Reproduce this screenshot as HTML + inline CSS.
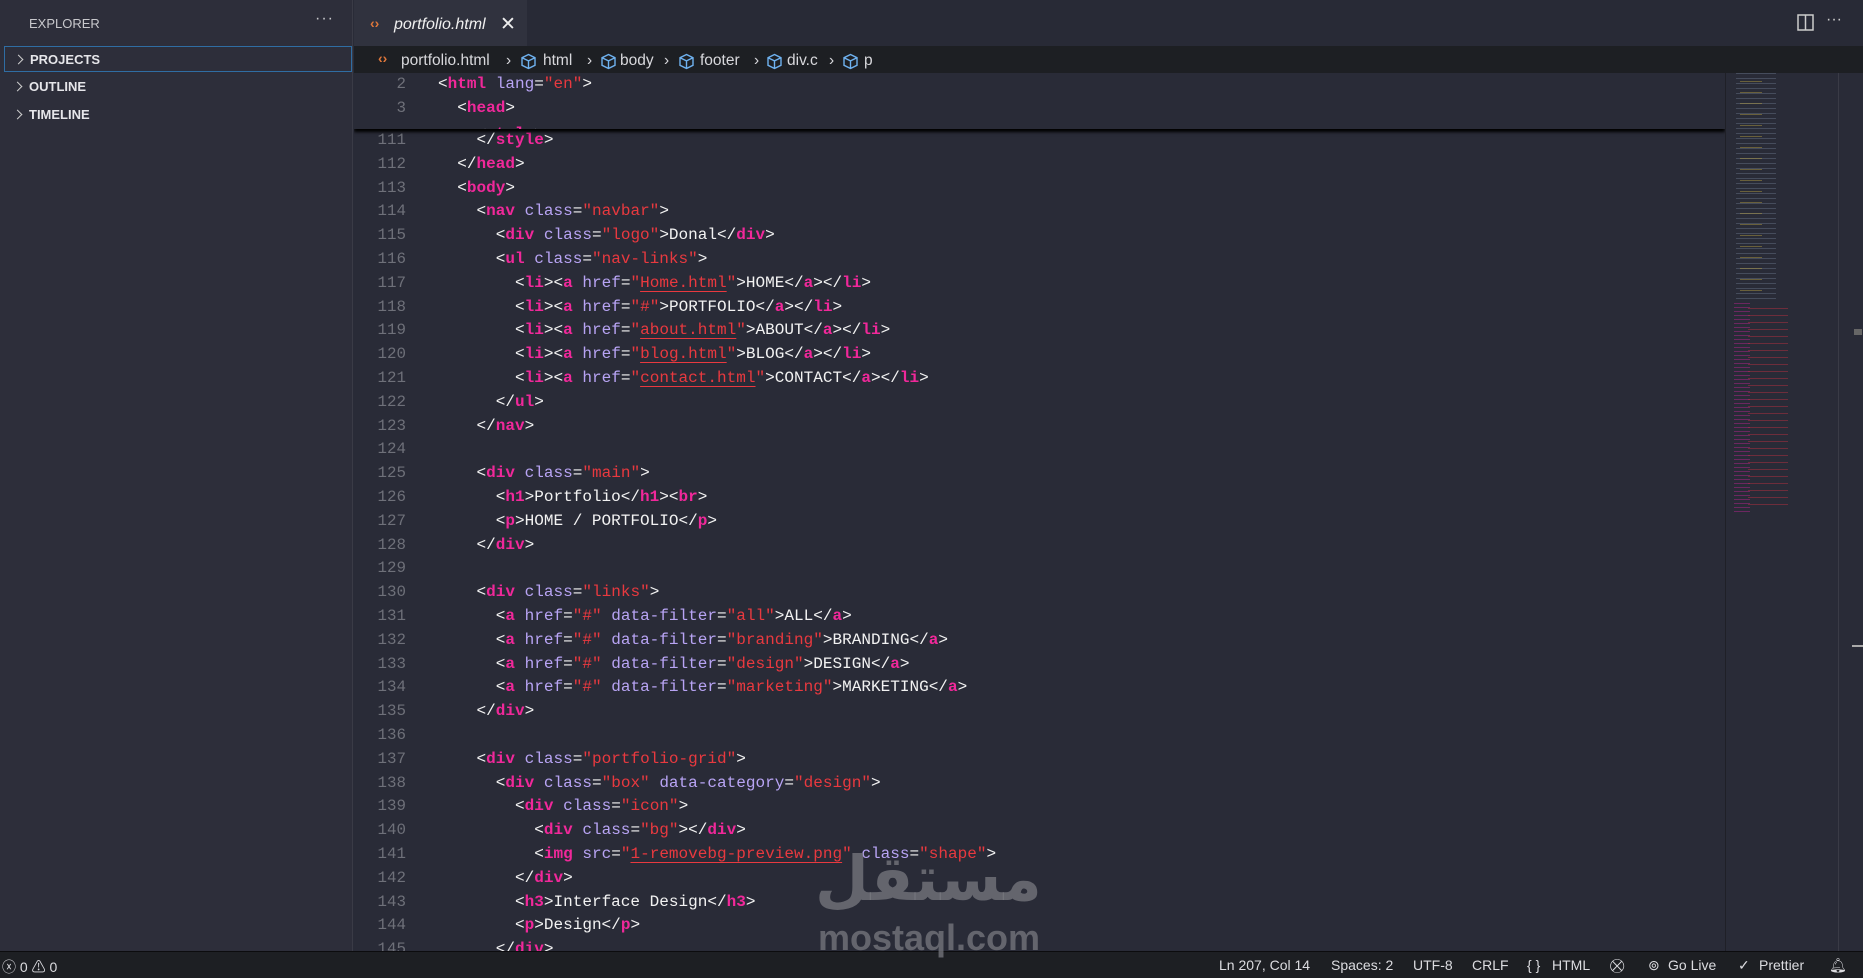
<!DOCTYPE html>
<html><head><meta charset="utf-8"><style>
*{margin:0;padding:0;box-sizing:border-box}
body{width:1863px;height:978px;overflow:hidden;background:#292b37;font-family:"Liberation Sans",sans-serif;color:#d4d4d8;position:relative}
.side{position:absolute;left:0;top:0;width:353px;height:951px;background:#2d2e3a;border-right:1px solid #3a3b46}
.side .hd{position:absolute;left:29px;top:16px;font-size:13px;color:#c8c8cc}
.side .dots{position:absolute;left:315px;top:10px;font-size:16px;color:#c8c8cc;letter-spacing:1px}
.sec{position:absolute;left:4px;width:348px;height:26px;font-size:13px;font-weight:bold;color:#e6e6ea;line-height:26px;padding-left:25px}
.sec:before{content:"";position:absolute;left:10px;top:9px;width:6px;height:6px;border-right:1.3px solid #ccc;border-top:1.3px solid #ccc;transform:rotate(45deg)}
.tabbar{position:absolute;left:354px;top:0;right:0;height:46px;background:#282a36}
.tab{position:absolute;left:0;top:0;width:173px;height:46px;background:#30323e}
.bc{position:absolute;left:354px;top:46px;right:0;height:27px;background:#1d1f23;font-size:15.5px;color:#d8d8dc}
.bc span{position:absolute;top:6px}
.cube{position:absolute;top:7px}
.editor{position:absolute;left:354px;top:73px;width:1371px;height:878px;overflow:hidden}
.ln{position:absolute;left:0;width:52px;text-align:right;font-family:"Liberation Mono",monospace;font-size:15.8px;line-height:24px;color:#6e7079}
.cd{position:absolute;left:84px;font-family:"Liberation Mono",monospace;font-size:16.05px;line-height:24px;color:#f2f2f2;white-space:pre}
.t{color:#f0289a;font-weight:bold}.a{color:#b8a4f4}.s{color:#e8393f}.u{color:#e8393f;text-decoration:underline;text-decoration-color:#e8393f;text-underline-offset:4px}
.sticky{position:absolute;left:0;top:0;width:1371px;height:56px;background:#292b37;box-shadow:0 3px 3px #000;z-index:2;overflow:hidden}
.mini{position:absolute;left:1725px;top:73px;width:138px;height:878px;background:#292b37;border-left:1px solid #1f2027}
.status{position:absolute;left:0;top:951px;width:1863px;height:27px;background:#1d1f23;border-top:1px solid #0c0c0e;font-size:14px;color:#dcdce0}
.status span{position:absolute;top:5px;white-space:nowrap}
.wm{position:absolute;color:rgba(120,122,128,.75);font-weight:bold;z-index:3}
</style></head><body>
<div class="side">
<div class="hd">EXPLORER</div><div class="dots">···</div>
<div class="sec" style="top:46px;border:1px solid #2f6da3">PROJECTS</div>
<div class="sec" style="top:74px">OUTLINE</div>
<div class="sec" style="top:102px">TIMELINE</div>
</div>
<div class="tabbar"><div class="tab">
<span style="position:absolute;left:16px;top:15px;color:#e0773a;font-size:14px;font-weight:bold">‹›</span>
<span style="position:absolute;left:40px;top:16px;font-style:italic;font-size:16px;color:#f0f0f0">portfolio.html</span>
<span style="position:absolute;left:146px;top:13px;font-size:19px;color:#eee">✕</span></div>
<svg style="position:absolute;left:1443px;top:14px" width="18" height="18"><rect x="1" y="1" width="15" height="15" fill="none" stroke="#ccc" stroke-width="1.5"/><line x1="8.5" y1="1" x2="8.5" y2="16" stroke="#ccc" stroke-width="1.5"/></svg>
<span style="position:absolute;left:1472px;top:11px;font-size:16px;color:#ccc">···</span>
</div>
<div class="bc">
<span style="left:24px;top:4px;color:#e0773a;font-weight:bold;font-size:14px">‹›</span>
<span style="left:47px">portfolio.html</span><span style="left:152px">›</span>
<svg class="cube" style="left:166px" width="17" height="17" viewBox="0 0 17 17"><path d="M8.5 1.5l6.5 3.2v7.6l-6.5 3.2-6.5-3.2V4.7z M2 4.7l6.5 3.2 6.5-3.2 M8.5 7.9v7.6" fill="none" stroke="#6fb2f0" stroke-width="1.4"/></svg>
<span style="left:189px">html</span><span style="left:233px">›</span>
<svg class="cube" style="left:246px" width="17" height="17" viewBox="0 0 17 17"><path d="M8.5 1.5l6.5 3.2v7.6l-6.5 3.2-6.5-3.2V4.7z M2 4.7l6.5 3.2 6.5-3.2 M8.5 7.9v7.6" fill="none" stroke="#6fb2f0" stroke-width="1.4"/></svg>
<span style="left:266px">body</span><span style="left:310px">›</span>
<svg class="cube" style="left:324px" width="17" height="17" viewBox="0 0 17 17"><path d="M8.5 1.5l6.5 3.2v7.6l-6.5 3.2-6.5-3.2V4.7z M2 4.7l6.5 3.2 6.5-3.2 M8.5 7.9v7.6" fill="none" stroke="#6fb2f0" stroke-width="1.4"/></svg>
<span style="left:346px">footer</span><span style="left:400px">›</span>
<svg class="cube" style="left:412px" width="17" height="17" viewBox="0 0 17 17"><path d="M8.5 1.5l6.5 3.2v7.6l-6.5 3.2-6.5-3.2V4.7z M2 4.7l6.5 3.2 6.5-3.2 M8.5 7.9v7.6" fill="none" stroke="#6fb2f0" stroke-width="1.4"/></svg>
<span style="left:433px">div.c</span><span style="left:475px">›</span>
<svg class="cube" style="left:488px" width="17" height="17" viewBox="0 0 17 17"><path d="M8.5 1.5l6.5 3.2v7.6l-6.5 3.2-6.5-3.2V4.7z M2 4.7l6.5 3.2 6.5-3.2 M8.5 7.9v7.6" fill="none" stroke="#6fb2f0" stroke-width="1.4"/></svg>
<span style="left:510px">p</span>
</div>
<div class="editor">
<div class="sticky">
<div class="ln" style="top:-1px">2</div><div class="cd" style="top:-1px">&lt;<span class="t">html</span> <span class="a">lang</span>=<span class="s">"en"</span>&gt;</div>
<div class="ln" style="top:23px">3</div><div class="cd" style="top:23px">  &lt;<span class="t">head</span>&gt;</div>
<div class="cd" style="top:49px">    &lt;<span class="t">style</span>&gt;</div>
</div>
<div class="ln" style="top:55px">111</div><div class="cd" style="top:55px">    &lt;/<span class="t">style</span>&gt;</div>
<div class="ln" style="top:78.8px">112</div><div class="cd" style="top:78.8px">  &lt;/<span class="t">head</span>&gt;</div>
<div class="ln" style="top:102.6px">113</div><div class="cd" style="top:102.6px">  &lt;<span class="t">body</span>&gt;</div>
<div class="ln" style="top:126.4px">114</div><div class="cd" style="top:126.4px">    &lt;<span class="t">nav</span> <span class="a">class</span>=<span class="s">"navbar"</span>&gt;</div>
<div class="ln" style="top:150.2px">115</div><div class="cd" style="top:150.2px">      &lt;<span class="t">div</span> <span class="a">class</span>=<span class="s">"logo"</span>&gt;Donal&lt;/<span class="t">div</span>&gt;</div>
<div class="ln" style="top:174px">116</div><div class="cd" style="top:174px">      &lt;<span class="t">ul</span> <span class="a">class</span>=<span class="s">"nav-links"</span>&gt;</div>
<div class="ln" style="top:197.8px">117</div><div class="cd" style="top:197.8px">        &lt;<span class="t">li</span>&gt;&lt;<span class="t">a</span> <span class="a">href</span>=<span class="s">"<span class="u">Home.html</span>"</span>&gt;HOME&lt;/<span class="t">a</span>&gt;&lt;/<span class="t">li</span>&gt;</div>
<div class="ln" style="top:221.6px">118</div><div class="cd" style="top:221.6px">        &lt;<span class="t">li</span>&gt;&lt;<span class="t">a</span> <span class="a">href</span>=<span class="s">"#"</span>&gt;PORTFOLIO&lt;/<span class="t">a</span>&gt;&lt;/<span class="t">li</span>&gt;</div>
<div class="ln" style="top:245.4px">119</div><div class="cd" style="top:245.4px">        &lt;<span class="t">li</span>&gt;&lt;<span class="t">a</span> <span class="a">href</span>=<span class="s">"<span class="u">about.html</span>"</span>&gt;ABOUT&lt;/<span class="t">a</span>&gt;&lt;/<span class="t">li</span>&gt;</div>
<div class="ln" style="top:269.2px">120</div><div class="cd" style="top:269.2px">        &lt;<span class="t">li</span>&gt;&lt;<span class="t">a</span> <span class="a">href</span>=<span class="s">"<span class="u">blog.html</span>"</span>&gt;BLOG&lt;/<span class="t">a</span>&gt;&lt;/<span class="t">li</span>&gt;</div>
<div class="ln" style="top:293px">121</div><div class="cd" style="top:293px">        &lt;<span class="t">li</span>&gt;&lt;<span class="t">a</span> <span class="a">href</span>=<span class="s">"<span class="u">contact.html</span>"</span>&gt;CONTACT&lt;/<span class="t">a</span>&gt;&lt;/<span class="t">li</span>&gt;</div>
<div class="ln" style="top:316.8px">122</div><div class="cd" style="top:316.8px">      &lt;/<span class="t">ul</span>&gt;</div>
<div class="ln" style="top:340.6px">123</div><div class="cd" style="top:340.6px">    &lt;/<span class="t">nav</span>&gt;</div>
<div class="ln" style="top:364.4px">124</div>
<div class="ln" style="top:388.2px">125</div><div class="cd" style="top:388.2px">    &lt;<span class="t">div</span> <span class="a">class</span>=<span class="s">"main"</span>&gt;</div>
<div class="ln" style="top:412px">126</div><div class="cd" style="top:412px">      &lt;<span class="t">h1</span>&gt;Portfolio&lt;/<span class="t">h1</span>&gt;&lt;<span class="t">br</span>&gt;</div>
<div class="ln" style="top:435.8px">127</div><div class="cd" style="top:435.8px">      &lt;<span class="t">p</span>&gt;HOME / PORTFOLIO&lt;/<span class="t">p</span>&gt;</div>
<div class="ln" style="top:459.6px">128</div><div class="cd" style="top:459.6px">    &lt;/<span class="t">div</span>&gt;</div>
<div class="ln" style="top:483.4px">129</div>
<div class="ln" style="top:507.2px">130</div><div class="cd" style="top:507.2px">    &lt;<span class="t">div</span> <span class="a">class</span>=<span class="s">"links"</span>&gt;</div>
<div class="ln" style="top:531px">131</div><div class="cd" style="top:531px">      &lt;<span class="t">a</span> <span class="a">href</span>=<span class="s">"#"</span> <span class="a">data-filter</span>=<span class="s">"all"</span>&gt;ALL&lt;/<span class="t">a</span>&gt;</div>
<div class="ln" style="top:554.8px">132</div><div class="cd" style="top:554.8px">      &lt;<span class="t">a</span> <span class="a">href</span>=<span class="s">"#"</span> <span class="a">data-filter</span>=<span class="s">"branding"</span>&gt;BRANDING&lt;/<span class="t">a</span>&gt;</div>
<div class="ln" style="top:578.6px">133</div><div class="cd" style="top:578.6px">      &lt;<span class="t">a</span> <span class="a">href</span>=<span class="s">"#"</span> <span class="a">data-filter</span>=<span class="s">"design"</span>&gt;DESIGN&lt;/<span class="t">a</span>&gt;</div>
<div class="ln" style="top:602.4px">134</div><div class="cd" style="top:602.4px">      &lt;<span class="t">a</span> <span class="a">href</span>=<span class="s">"#"</span> <span class="a">data-filter</span>=<span class="s">"marketing"</span>&gt;MARKETING&lt;/<span class="t">a</span>&gt;</div>
<div class="ln" style="top:626.2px">135</div><div class="cd" style="top:626.2px">    &lt;/<span class="t">div</span>&gt;</div>
<div class="ln" style="top:650px">136</div>
<div class="ln" style="top:673.8px">137</div><div class="cd" style="top:673.8px">    &lt;<span class="t">div</span> <span class="a">class</span>=<span class="s">"portfolio-grid"</span>&gt;</div>
<div class="ln" style="top:697.6px">138</div><div class="cd" style="top:697.6px">      &lt;<span class="t">div</span> <span class="a">class</span>=<span class="s">"box"</span> <span class="a">data-category</span>=<span class="s">"design"</span>&gt;</div>
<div class="ln" style="top:721.4px">139</div><div class="cd" style="top:721.4px">        &lt;<span class="t">div</span> <span class="a">class</span>=<span class="s">"icon"</span>&gt;</div>
<div class="ln" style="top:745.2px">140</div><div class="cd" style="top:745.2px">          &lt;<span class="t">div</span> <span class="a">class</span>=<span class="s">"bg"</span>&gt;&lt;/<span class="t">div</span>&gt;</div>
<div class="ln" style="top:769px">141</div><div class="cd" style="top:769px">          &lt;<span class="t">img</span> <span class="a">src</span>=<span class="s">"<span class="u">1-removebg-preview.png</span>"</span> <span class="a">class</span>=<span class="s">"shape"</span>&gt;</div>
<div class="ln" style="top:792.8px">142</div><div class="cd" style="top:792.8px">        &lt;/<span class="t">div</span>&gt;</div>
<div class="ln" style="top:816.6px">143</div><div class="cd" style="top:816.6px">        &lt;<span class="t">h3</span>&gt;Interface Design&lt;/<span class="t">h3</span>&gt;</div>
<div class="ln" style="top:840.4px">144</div><div class="cd" style="top:840.4px">        &lt;<span class="t">p</span>&gt;Design&lt;/<span class="t">p</span>&gt;</div>
<div class="ln" style="top:864.2px">145</div><div class="cd" style="top:864.2px">      &lt;/<span class="t">div</span>&gt;</div>
</div>
<div class="mini">
<div style="position:absolute;left:10px;top:0;width:40px;height:230px;background:repeating-linear-gradient(#7a8aa0 0 1.2px,transparent 1.2px 5px);opacity:.35"></div>
<div style="position:absolute;left:14px;top:8px;width:22px;height:220px;background:repeating-linear-gradient(#b8a040 0 1.2px,transparent 1.2px 11px);opacity:.45"></div>
<div style="position:absolute;left:8px;top:230px;width:16px;height:210px;background:repeating-linear-gradient(#b0238a 0 1.2px,transparent 1.2px 4px);opacity:.5"></div>
<div style="position:absolute;left:22px;top:235px;width:40px;height:200px;background:repeating-linear-gradient(#c03040 0 1.2px,transparent 1.2px 7px);opacity:.45"></div>
<div style="position:absolute;left:112px;top:0;width:1px;height:878px;background:#3a3b46"></div>
<div style="position:absolute;left:128px;top:256px;width:8px;height:6px;background:#666"></div>
<div style="position:absolute;left:126px;top:572px;width:12px;height:2px;background:#aaa"></div>
</div>
<div class="wm" style="left:815px;top:846px;font-family:'DejaVu Sans',sans-serif;font-size:62px;line-height:66px">مستقل</div>
<div class="wm" style="left:818px;top:918px;font-size:36px;line-height:40px">mostaql.com</div>
<div class="status">
<span style="left:2px">ⓧ 0 ⚠ 0</span>
<span style="left:1219px">Ln 207, Col 14</span>
<span style="left:1331px">Spaces: 2</span>
<span style="left:1413px">UTF-8</span>
<span style="left:1472px">CRLF</span>
<span style="left:1527px">{ }</span>
<span style="left:1552px">HTML</span>
<span style="left:1610px">⛒</span>
<span style="left:1648px">⊚</span><span style="left:1668px">Go Live</span>
<span style="left:1738px">✓</span><span style="left:1759px">Prettier</span>
<span style="left:1829px">🔔︎</span>
</div>
</body></html>
